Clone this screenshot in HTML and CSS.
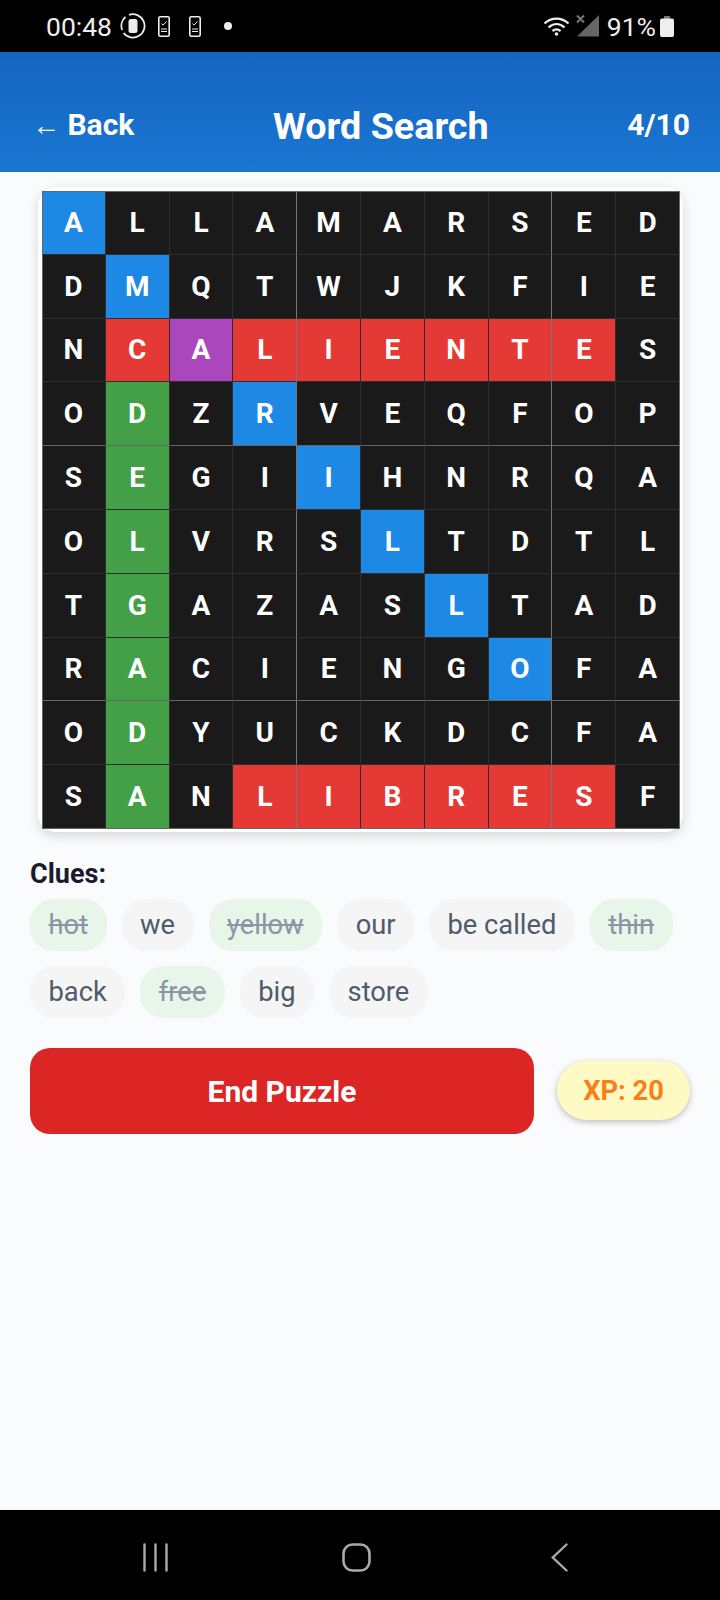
FILE: index.html
```html
<!DOCTYPE html>
<html lang="en">
<head>
    <meta charset="UTF-8">
    <meta name="viewport" content="width=device-width, initial-scale=1.0">
    <title>Word Search</title>
    <link rel="stylesheet" href="styles.css">
</head>
<body>
    <div class="status-bar">
        <div class="status-left">
            <span class="status-time">00:48</span>
            <svg class="status-icon" width="26" height="26" viewBox="0 0 26 26">
                <path d="M9 1.800A11.700 11.700 0 1 1 3.600 20M2.200 17A11.700 11.700 0 0 1 5.500 4" fill="none" stroke="#eee" stroke-width="1.800"/>
                <rect x="8.500" y="6" width="9" height="14" rx="2.500" fill="#eee"/>
            </svg>
            <svg class="status-icon phone-one" width="12" height="21" viewBox="0 0 12 21">
                <rect x="0.800" y="0.800" width="10.400" height="19.400" rx="1.500" fill="none" stroke="#eee" stroke-width="1.600"/>
                <path d="M3.500 7.500l1.600 1.600L8.500 5.500M3 13h6M3 15.500h6" fill="none" stroke="#eee" stroke-width="1"/>
            </svg>
            <svg class="status-icon phone-two" width="12" height="21" viewBox="0 0 12 21">
                <rect x="0.800" y="0.800" width="10.400" height="19.400" rx="1.500" fill="none" stroke="#eee" stroke-width="1.600"/>
                <path d="M3.500 7.500l1.600 1.600L8.500 5.500M3 13h6M3 15.500h6" fill="none" stroke="#eee" stroke-width="1"/>
            </svg>
            <span class="status-dot"></span>
        </div>
        <div class="status-right">
            <svg width="27" height="20" viewBox="0 0 27 20">
                <path d="M1.500 7.500C8.500 1 18.500 1 25.500 7.500M5.500 11.500C10.500 7 16.500 7 21.500 11.500M9.500 15C12 13 15 13 17.500 15" fill="none" stroke="#eee" stroke-width="2.300"/>
                <circle cx="13.500" cy="18" r="1.800" fill="#eee"/>
            </svg>
            <svg class="signal" width="24" height="24" viewBox="0 0 24 24">
                <path d="M23 1v21.500H1z" fill="#666"/>
                <path d="M1 1.500l7 7M8 1.500l-7 7" stroke="#777" stroke-width="2"/>
            </svg>
            <span class="status-pct">91%</span>
            <svg width="14" height="21" viewBox="0 0 14 21">
                <path d="M4 0h6v3H4z" fill="#777"/>
                <rect x="0" y="2.500" width="14" height="18.500" rx="2" fill="#eee"/>
            </svg>
        </div>
    </div>

    <header class="app-header">
        <a class="back-link"><span class="back-arrow">←</span> Back</a>
        <h1>Word Search</h1>
        <span class="progress">4/10</span>
    </header>

    <main class="content">
        <div class="board-card">
            <div class="board" id="board"></div>
        </div>

        <div class="clues-title">Clues:</div>
        <div class="clues">
            <span class="chip found">hot</span>
            <span class="chip">we</span>
            <span class="chip found">yellow</span>
            <span class="chip">our</span>
            <span class="chip">be called</span>
            <span class="chip found">thin</span>
            <span class="chip">back</span>
            <span class="chip found">free</span>
            <span class="chip">big</span>
            <span class="chip">store</span>
        </div>

        <div class="actions">
            <button class="end-btn">End Puzzle</button>
            <div class="xp-pill">XP: 20</div>
        </div>
    </main>

    <nav class="nav-bar">
        <svg class="nav-recent" width="25" height="29" viewBox="0 0 25 29">
            <path d="M1.500 1.500v26M12.500 1.500v26M23.500 1.500v26" stroke="#aaa" stroke-width="2.400" stroke-linecap="round"/>
        </svg>
        <svg class="nav-home" width="29" height="29" viewBox="0 0 29 29">
            <rect x="1.500" y="1.500" width="26" height="26" rx="9" fill="none" stroke="#aaa" stroke-width="2.600"/>
        </svg>
        <svg width="17" height="29" viewBox="0 0 17 29">
            <path d="M15.500 1.500L1.800 14.500l13.700 13" fill="none" stroke="#aaa" stroke-width="2.400" stroke-linecap="round"/>
        </svg>
    </nav>

    <script>
        const rows = [
            'ALLAMARSED',
            'DMQTWJKFIE',
            'NCALIENTES',
            'ODZRVEQFOP',
            'SEGIIHNRQA',
            'OLVRSLTDTL',
            'TGAZASLTAD',
            'RACIENGOFA',
            'ODYUCKDCFA',
            'SANLIBRESF'
        ];
        // b = blue word, r = red, g = green, p = crossing of two words
        const marks = [
            'b.........',
            '.b........',
            '.rprrrrrr.',
            '.g.b......',
            '.g..b.....',
            '.g...b....',
            '.g....b...',
            '.g.....b..',
            '.g........',
            '.g.rrrrrr.'
        ];
        const colours = { b: 'blue', r: 'red', g: 'green', p: 'purple' };
        const board = document.getElementById('board');

        rows.forEach(function (row, r) {
            row.split('').forEach(function (letter, c) {
                const cell = document.createElement('div');
                cell.className = 'cell';
                if (marks[r][c] !== '.') {
                    cell.className += ' ' + colours[marks[r][c]];
                }
                // every fourth line shows lighter
                if (c === 3 || c === 7) {
                    cell.className += ' line-right';
                }
                if (r === 3 || r === 7) {
                    cell.className += ' line-bottom';
                }
                cell.textContent = letter;
                board.appendChild(cell);
            });
        });
    </script>
</body>
</html>
```

FILE: styles.css
```css
* {
    box-sizing: border-box;
}
body {
    margin: 0;
    height: 1600px;
    display: flex;
    flex-direction: column;
    background-color: #fafbfd;
    font-family: Roboto, "Noto Sans", sans-serif;
}
.status-bar {
    height: 52px;
    background-color: #000;
    color: #eee;
    display: flex;
    justify-content: space-between;
    align-items: center;
    padding: 0 46px;
    font-size: 26.500px;
}
.status-left, .status-right {
    display: flex;
    align-items: center;
}
.status-icon {
    margin-left: 8px;
}
.phone-one {
    margin-left: 12px;
}
.phone-two {
    margin-left: 19px;
}
.status-dot {
    width: 8px;
    height: 8px;
    border-radius: 50%;
    background-color: #eee;
    margin-left: 23px;
}
.signal {
    margin-left: 6px;
}
.status-pct {
    margin: 0 4px 0 7px;
}
.app-header {
    height: 120px;
    background: linear-gradient(#1565c0, #1976d2);
    color: #fff;
    display: flex;
    justify-content: space-between;
    align-items: center;
    padding: 24px 30px 0 32px;
}
.back-link {
    font-size: 30px;
    font-weight: 700;
}
.back-arrow {
    font-size: 28px;
}
.app-header h1 {
    margin: 3px 0 0;
    font-size: 37.700px;
    font-weight: 700;
}
.progress {
    font-size: 30px;
    font-weight: 700;
}
.content {
    flex: 1;
    padding: 15px 30px 0;
}
.board-card {
    margin: 0 7px 0 8px;
    padding: 4px 3px 3px 4px;
    background-color: #fff;
    border-radius: 18px;
    box-shadow: 0 4px 12px rgba(0, 0, 0, 0.15);
}
.board {
    display: grid;
    grid-template-columns: repeat(10, 1fr);
    grid-auto-rows: 63.800px;
    background-color: #1a1a1a;
    outline: 1px solid #666;
    outline-offset: -1px;
}
.cell {
    display: flex;
    align-items: center;
    justify-content: center;
    border-right: 1px solid #2e2e2e;
    border-bottom: 1px solid #2e2e2e;
    background-color: #1a1a1a;
    color: #fff;
    font-size: 28px;
    font-weight: 700;
}
.cell.line-right {
    border-right-color: #777;
}
.cell.line-bottom {
    border-bottom-color: #666;
}
.cell.blue {
    background-color: #1e88e5;
}
.cell.red {
    background-color: #e53935;
}
.cell.green {
    background-color: #43a047;
}
.cell.purple {
    background-color: #ab47bc;
}
.clues-title {
    margin-top: 26px;
    font-size: 27px;
    font-weight: 700;
    color: #1a1a2e;
}
.clues {
    display: flex;
    flex-wrap: wrap;
    gap: 15px;
    margin-top: 9px;
}
.chip {
    padding: 0 18.500px;
    height: 52px;
    line-height: 52px;
    border-radius: 24px;
    background-color: #f5f5f5;
    color: #4f5b6b;
    font-size: 27.300px;
}
.chip.found {
    background-color: #e8f5e9;
    color: #8a96a6;
    text-decoration: line-through;
}
.actions {
    display: flex;
    align-items: center;
    justify-content: space-between;
    margin-top: 30px;
}
.end-btn {
    width: 504px;
    height: 86px;
    padding-top: 2px;
    border: none;
    border-radius: 20px;
    background-color: #dc2626;
    color: #fff;
    font-family: inherit;
    font-size: 30px;
    font-weight: 700;
}
.xp-pill {
    width: 133px;
    height: 59px;
    border-radius: 30px;
    background-color: #fff9c4;
    color: #f97f17;
    font-size: 27.300px;
    font-weight: 700;
    display: flex;
    align-items: center;
    justify-content: center;
    box-shadow: 0 2px 6px rgba(0, 0, 0, 0.25);
}
.nav-bar {
    height: 90px;
    background-color: #000;
    display: flex;
    align-items: center;
    padding: 4px 0 0 143px;
}
.nav-home {
    margin: 0 180px 0 174px;
}
```
